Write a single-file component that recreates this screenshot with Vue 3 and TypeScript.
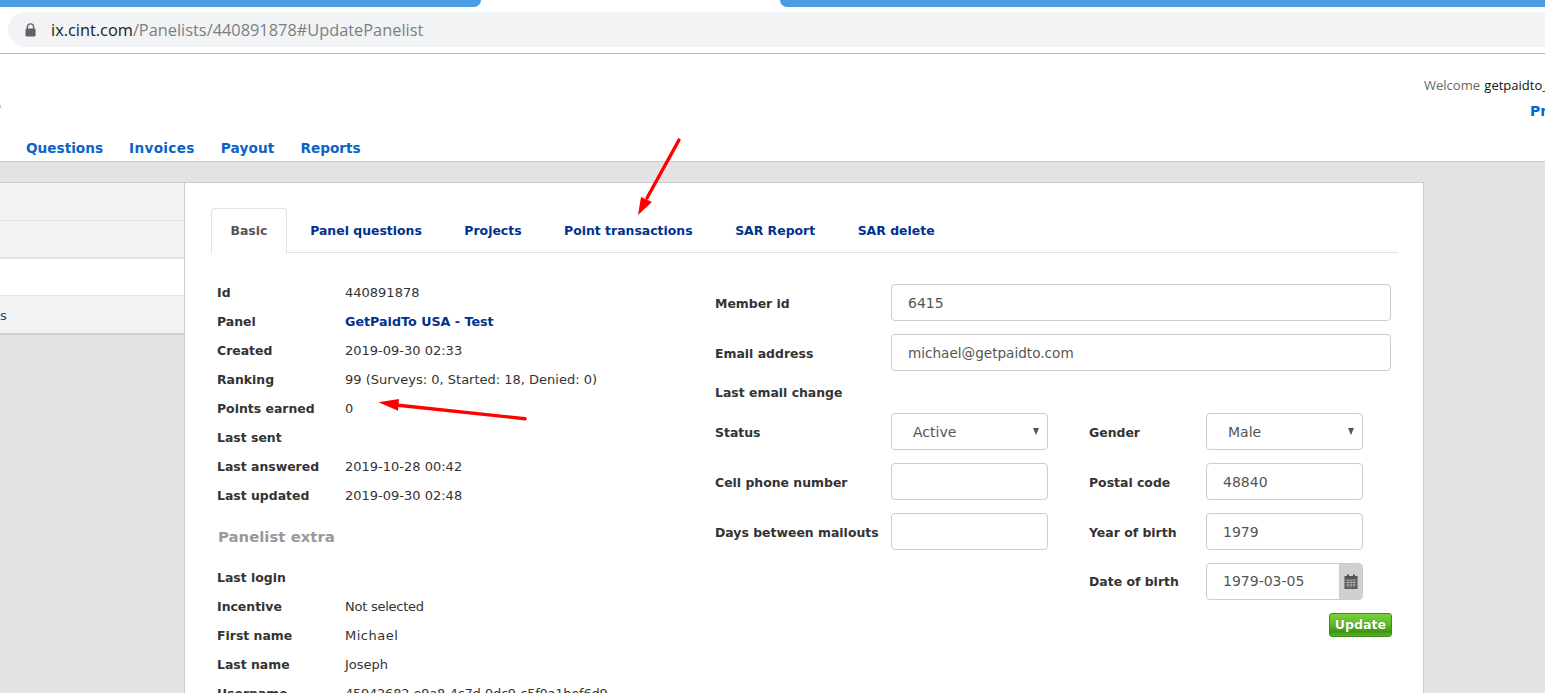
<script setup lang="ts">
const navItems = ['Questions', 'Invoices', 'Payout', 'Reports']
const tabs = ['Panel questions', 'Projects', 'Point transactions', 'SAR Report', 'SAR delete']

const basicRows = [
  { label: 'Id', value: '440891878' },
  { label: 'Panel', value: 'GetPaidTo USA - Test', cls: 'panel-link' },
  { label: 'Created', value: '2019-09-30 02:33' },
  { label: 'Ranking', value: '99 (Surveys: 0, Started: 18, Denied: 0)' },
  { label: 'Points earned', value: '0' },
  { label: 'Last sent', value: '' },
  { label: 'Last answered', value: '2019-10-28 00:42' },
  { label: 'Last updated', value: '2019-09-30 02:48' },
]

const extraRows = [
  { label: 'Last login', value: '' },
  { label: 'Incentive', value: 'Not selected', cls: 'tight' },
  { label: 'First name', value: 'Michael', cls: 'loose' },
  { label: 'Last name', value: 'Joseph' },
  { label: 'Username', value: '45942682-e9a8-4c7d-9dc9-c5f0a1bef6d9', cls: 'tight' },
]
</script>

<template>
  <div class="page">
    <div class="tabstrip">
      <div class="strip-tab left"></div>
      <div class="strip-active"></div>
      <div class="strip-tab right"></div>
    </div>
    <div class="urlbar">
      <div class="omnibox">
        <svg class="lock" width="11" height="14" viewBox="0 0 11 14">
          <path d="M2.4 6V4a3.1 3.1 0 0 1 6.2 0v2" fill="none" stroke="#5f6368" stroke-width="1.4" />
          <rect x="0.5" y="5.5" width="10" height="8" rx="1.2" fill="#5f6368" />
        </svg>
        <span class="host">ix.cint.com</span><span class="path">/Panelists/440891878#UpdatePanelist</span>
      </div>
    </div>

    <header class="site-header">
      <i class="logo-edge"></i>
      <div class="welcome">Welcome <span>getpaidto_user</span></div>
      <a class="profile">Profile</a>
      <nav class="main-nav">
        <a v-for="item in navItems" :key="item">{{ item }}</a>
      </nav>
    </header>

    <div class="content">
      <aside class="sidebar">
        <div class="side-row"></div>
        <div class="side-row"></div>
        <div class="side-row active"></div>
        <div class="side-row last"><span>ts</span></div>
      </aside>

      <main class="card">
        <div class="tabs">
          <div class="tab active">Basic</div>
          <div v-for="tab in tabs" :key="tab" class="tab">{{ tab }}</div>
        </div>

        <div class="columns">
          <section class="details">
            <div v-for="row in basicRows" :key="row.label" class="detail-row">
              <b>{{ row.label }}</b>
              <span :class="row.cls">{{ row.value }}</span>
            </div>
            <h3>Panelist extra</h3>
            <div v-for="row in extraRows" :key="row.label" class="detail-row">
              <b>{{ row.label }}</b>
              <span :class="row.cls">{{ row.value }}</span>
            </div>
          </section>

          <section class="form">
            <div class="form-row">
              <label>Member id</label>
              <div class="field wide">6415</div>
            </div>
            <div class="form-row">
              <label>Email address</label>
              <div class="field wide email">michael@getpaidto.com</div>
            </div>
            <div class="form-row short">
              <label>Last email change</label>
            </div>

            <div class="form-split">
              <div class="split-col">
                <div class="form-row">
                  <label>Status</label>
                  <div class="field select">Active<i class="caret"></i></div>
                </div>
                <div class="form-row">
                  <label>Cell phone number</label>
                  <div class="field"></div>
                </div>
                <div class="form-row">
                  <label>Days between mailouts</label>
                  <div class="field"></div>
                </div>
              </div>
              <div class="split-col second">
                <div class="form-row">
                  <label>Gender</label>
                  <div class="field select">Male<i class="caret"></i></div>
                </div>
                <div class="form-row">
                  <label>Postal code</label>
                  <div class="field">48840</div>
                </div>
                <div class="form-row">
                  <label>Year of birth</label>
                  <div class="field">1979</div>
                </div>
                <div class="form-row date-row">
                  <label>Date of birth</label>
                  <div class="field date">
                    <span>1979-03-05</span>
                    <div class="cal">
                      <svg width="14" height="15" viewBox="0 0 14 15">
                        <path d="M0.5 2h13v13h-13z" fill="#555" />
                        <rect x="3" y="0.5" width="2" height="3" fill="#555" />
                        <rect x="9" y="0.5" width="2" height="3" fill="#555" />
                        <path d="M1.5 6h11M1.5 8.5h11M1.5 11h11M4 6v8M7 6v8M10 6v8" stroke="#b8b8b8" stroke-width="0.8" fill="none" />
                      </svg>
                    </div>
                  </div>
                </div>
              </div>
            </div>
            <div class="actions">
              <button class="update">Update</button>
            </div>
          </section>
        </div>
      </main>
    </div>

    <svg class="arrows" width="1545" height="693" viewBox="0 0 1545 693">
      <path d="M679 140L647 198" stroke="#f00" stroke-width="3.4" stroke-linecap="round" fill="none" />
      <path d="M638 215L641 197L652 202Z" fill="#f00" />
      <path d="M525 418.7L396 405" stroke="#f00" stroke-width="3.4" stroke-linecap="round" fill="none" />
      <path d="M378.5 402.3L399 399L398 410.7Z" fill="#f00" />
    </svg>
  </div>
</template>

<style>
html, body {
  margin: 0;
  background: #fff;
}
</style>

<style scoped>
.page {
  position: relative;
  width: 1545px;
  height: 693px;
  overflow: hidden;
  background: #e3e3e3;
  font-family: "DejaVu Sans", Verdana, sans-serif;
  font-size: 13px;
  color: #333;
}

.tabstrip {
  display: flex;
  height: 7px;
  background: #fff;
}
.strip-tab {
  background: #4a9de3;
}
.strip-tab.left {
  width: 481px;
  border-bottom-right-radius: 7px;
}
.strip-active {
  width: 299px;
}
.strip-tab.right {
  flex: 1;
  border-bottom-left-radius: 7px;
}

.urlbar {
  height: 41px;
  background: #fff;
  border-bottom: 1px solid #b9b9b9;
  padding: 5px 0 0 8px;
}
.omnibox {
  display: flex;
  align-items: center;
  height: 35px;
  border-radius: 18px 0 0 18px;
  background: #f1f3f4;
  padding-left: 17px;
  font-family: "Open Sans", sans-serif;
  font-size: 16.35px;
  white-space: nowrap;
}
.lock {
  margin-right: 15px;
}
.host {
  color: #202124;
}
.path {
  color: #7b7f83;
}

.site-header {
  position: relative;
  height: 107px;
  background: #fff;
  border-bottom: 1px solid #c8c8c8;
  white-space: nowrap;
}
.logo-edge {
  position: absolute;
  left: 0;
  top: 51px;
  width: 1px;
  height: 3px;
  background: #c4c4c4;
}
.welcome {
  padding: 23px 0 0 1424px;
  height: 16px;
  line-height: 16px;
  font-family: "Open Sans", sans-serif;
  font-size: 13px;
  color: #666;
}
.welcome span {
  margin-left: 1px;
  color: #111;
}
.profile {
  display: block;
  padding: 10px 0 0 1530px;
  line-height: 16px;
  font-weight: bold;
  font-size: 14px;
  color: #0066cc;
}
.main-nav {
  display: flex;
  gap: 26px;
  padding: 20px 0 0 26px;
}
.main-nav a {
  line-height: 18px;
  font-size: 13.65px;
  font-weight: bold;
  color: #0a63c9;
}
.main-nav a:nth-child(2) {
  letter-spacing: 0.3px;
}
.main-nav a:nth-child(3) {
  letter-spacing: 0.15px;
}

.content {
  display: flex;
  align-items: flex-start;
  padding-top: 20px;
}
.sidebar {
  width: 184px;
  flex: none;
  border-top: 1px solid #cbcbcb;
  border-bottom: 2px solid #d0d0d0;
}
.side-row {
  height: 37px;
  background: #f3f3f3;
  border-bottom: 1px solid #e2e2e2;
}
.side-row:nth-child(2) {
  height: 36px;
  border-bottom-width: 2px;
}
.side-row.active {
  background: #fff;
  height: 36px;
}
.side-row.last {
  border-bottom: none;
  font-size: 13px;
  line-height: 39px;
  color: #1a4a8a;
}
.side-row.last span {
  display: block;
  margin-left: -5px;
}

.card {
  flex: none;
  width: 1240px;
  height: 600px;
  box-sizing: border-box;
  background: #fff;
  border: 1px solid #cbcbcb;
  padding: 25px 25px 0 26px;
}
.tabs {
  display: flex;
  height: 44px;
  border-bottom: 1px solid #e2e2e2;
  width: 1187px;
}
.tab {
  padding: 0 21.25px;
  line-height: 45px;
  font-size: 12.45px;
  font-weight: bold;
  color: #00318f;
  white-space: nowrap;
}
.tab.active {
  height: 44px;
  padding: 0 18.5px;
  margin-right: 2px;
  line-height: 43px;
  color: #555;
  background: #fff;
  border: 1px solid #e2e2e2;
  border-bottom-color: #fff;
  border-radius: 4px 4px 0 0;
}

.columns {
  display: flex;
  padding: 25px 0 0 6px;
}
.details {
  flex: none;
  width: 498px;
}
.detail-row {
  display: flex;
  height: 29px;
  line-height: 29px;
  white-space: nowrap;
}
.detail-row b {
  width: 128px;
  flex: none;
  font-size: 12.45px;
  color: #333;
}
.panel-link {
  font-weight: bold;
  font-size: 12.7px;
  color: #00318f;
}
.tight {
  letter-spacing: -0.25px;
}
.loose {
  letter-spacing: 0.5px;
}
h3 {
  margin: 0;
  height: 53px;
  padding: 14px 0 0 1px;
  box-sizing: border-box;
  line-height: 26px;
  font-size: 14.9px;
  font-weight: bold;
  color: #999;
}

.form {
  flex: none;
  width: 676px;
  padding-top: 6px;
}
.form-row {
  display: flex;
  align-items: center;
  height: 37px;
  margin-bottom: 13px;
}
.form-row.short {
  height: 16px;
  margin-bottom: 13px;
}
.form-row label {
  flex: none;
  width: 176px;
  padding-top: 1px;
  font-size: 12.45px;
  font-weight: bold;
  white-space: nowrap;
}
.form-row.date-row label {
  padding-top: 0;
}
.field {
  flex: none;
  box-sizing: border-box;
  width: 157px;
  height: 37px;
  line-height: 37px;
  padding: 0 16px;
  background: #fff;
  border: 1px solid #ccc;
  border-radius: 4px;
  font-size: 14px;
  color: #555;
}
.field.wide {
  width: 500px;
}
.field.email {
  font-size: 13.6px;
}
.field.select {
  position: relative;
  padding-left: 21px;
}
.caret {
  position: absolute;
  right: 8px;
  top: 14px;
  width: 0;
  height: 0;
  border-left: 3.5px solid transparent;
  border-right: 3.5px solid transparent;
  border-top: 7px solid #555;
}
.field.date {
  display: flex;
  line-height: 35px;
  padding: 0 0 0 16px;
  overflow: hidden;
  justify-content: space-between;
}
.cal {
  display: flex;
  align-items: center;
  justify-content: center;
  width: 24px;
  height: 37px;
  margin-top: -1px;
  margin-right: -1px;
  background: #d0d0d0;
}

.form-split {
  display: flex;
}
.split-col {
  flex: none;
  width: 374px;
}
.split-col.second {
  width: 274px;
}
.split-col.second label {
  width: 117px;
}

.actions {
  display: flex;
  justify-content: flex-end;
  margin-right: -1px;
}
.update {
  width: 63px;
  height: 24px;
  padding: 0 0 1px;
  border: 1px solid #3d8f1c;
  border-radius: 3px;
  background: linear-gradient(#78d03c 0%, #5cb82a 50%, #3f950f 80%, #5aae2e 100%);
  color: #fff;
  font-family: inherit;
  font-size: 12.6px;
  font-weight: bold;
  text-shadow: 0 0 1px #2d6b0e;
}

.arrows {
  position: absolute;
  left: 0;
  top: 0;
  pointer-events: none;
}
</style>
